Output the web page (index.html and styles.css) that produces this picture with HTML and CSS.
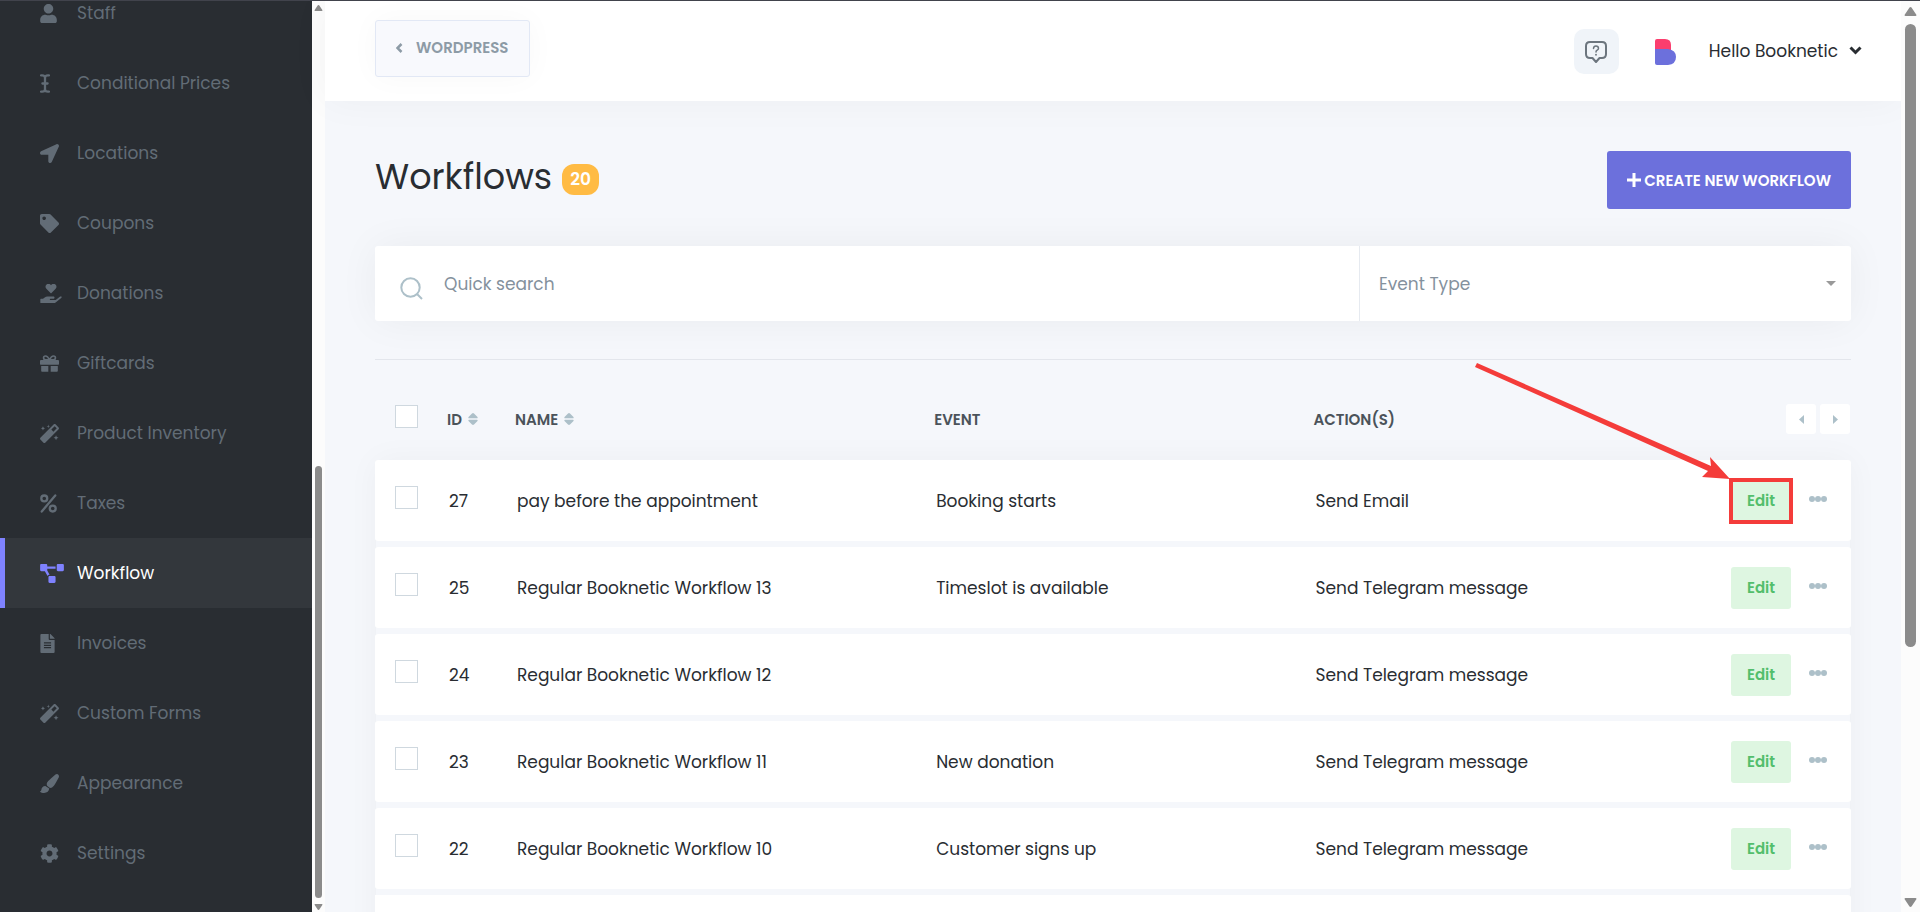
FILE: index.html
```html
<!DOCTYPE html>
<html lang="en">
<head>
    <meta charset="UTF-8">
    <meta name="viewport" content="width=device-width, initial-scale=1">
    <title>Workflows</title>
    <link rel="stylesheet" href="styles.css">
</head>
<body>
    <!-- Icon set -->
    <svg class="sprite" aria-hidden="true">
        <symbol id="i-user" viewBox="0 0 448 512"><path d="M224 256c70.700 0 128-57.300 128-128S294.700 0 224 0 96 57.300 96 128s57.300 128 128 128zm89.600 32h-16.700c-22.200 10.200-46.900 16-72.900 16s-50.600-5.800-72.900-16h-16.700C60.200 288 0 348.200 0 422.400V464c0 26.500 21.500 48 48 48h352c26.500 0 48-21.500 48-48v-41.600c0-74.200-60.200-134.400-134.400-134.400z"/></symbol>
        <symbol id="i-cursor" viewBox="0 0 256 512"><path d="M20 36h30q78 0 78 64v312q0 64-78 64H20M236 36h-30q-78 0-78 64M128 412q0 64 78 64h30M58 256h140" fill="none" stroke="currentColor" stroke-width="62" stroke-linecap="round"/></symbol>
        <symbol id="i-arrow" viewBox="0 0 512 512"><path d="M444.520 3.520L28.740 195.420c-47.970 22.390-31.980 92.750 19.190 92.750h175.910v175.910c0 51.170 70.360 67.170 92.750 19.190l191.900-415.780c15.990-38.390-25.590-79.970-63.970-63.970z"/></symbol>
        <symbol id="i-tag" viewBox="0 0 512 512"><path d="M0 252.118V48C0 21.490 21.490 0 48 0h204.118a48 48 0 0 1 33.941 14.059l211.882 211.882c18.745 18.745 18.745 49.137 0 67.882L293.823 497.941c-18.745 18.745-49.137 18.745-67.882 0L14.059 286.059A48 48 0 0 1 0 252.118zM112 64c-26.510 0-48 21.490-48 48s21.490 48 48 48 48-21.490 48-48-21.490-48-48-48z"/></symbol>
        <symbol id="i-donate" viewBox="0 0 576 512"><path d="M275 244l-112-114c-33-34-31-88 6-118 32-26 79-21 108 9l11 11 11-11c29-30 76-35 108-9 37 30 39 84 6 118L301 244c-7 7-19 7-26 0zM568 344c-12-11-31-10-43 0l-93 74c-11 9-25 14-40 14H272c-9 0-16-7-16-16s7-16 16-16h78c16 0 31-11 33-27 3-20-12-37-31-37H192c-27 0-53 9-74 26l-46 38H16c-9 0-16 7-16 16v80c0 9 7 16 16 16h357c14 0 28-5 39-14l152-121c15-12 16-35 4-47z"/></symbol>
        <symbol id="i-gift" viewBox="0 0 512 512"><path d="M32 320h192v160H64c-18 0-32-14-32-32zM288 320h192v128c0 18-14 32-32 32H288zM32 160h448c18 0 32 14 32 32v80c0 9-7 16-16 16H16c-9 0-16-7-16-16v-80c0-18 14-32 32-32z"/><path d="M256 160c-40-84-70-106-108-106-30 0-52 22-52 50 0 30 22 56 60 56zM256 160c40-84 70-106 108-106 30 0 52 22 52 50 0 30-22 56-60 56z" fill="none" stroke="currentColor" stroke-width="44"/></symbol>
        <symbol id="i-wand" viewBox="0 0 512 512"><path fill-rule="evenodd" d="M502 94L418 10c-13-13-33-13-46 0L10 372c-13 13-13 33 0 46l84 84c13 13 33 13 46 0l362-362c13-13 13-33 0-46zM361 207l-56-56 90-90 56 56zM80 60l18 38 38 18-38 18-18 38-18-38-38-18 38-18zM224 16l12 36 36 12-36 12-12 36-12-36-36-12 36-12zM432 300l20 48 48 20-48 20-20 48-20-48-48-20 48-20z"/></symbol>
        <symbol id="i-percent" viewBox="0 0 448 512"><g fill="none" stroke="currentColor"><circle cx="110" cy="120" r="80" stroke-width="62"/><circle cx="338" cy="392" r="80" stroke-width="62"/><path d="M406 40L42 472" stroke-width="62" stroke-linecap="round"/></g></symbol>
        <symbol id="i-flow" viewBox="0 0 640 512"><path d="M384 320H256c-17.670 0-32 14.330-32 32v128c0 17.670 14.330 32 32 32h128c17.670 0 32-14.330 32-32V352c0-17.670-14.330-32-32-32zM192 32c0-17.670-14.330-32-32-32H32C14.330 0 0 14.330 0 32v128c0 17.670 14.330 32 32 32h95.720l73.160 128.040C211.980 300.980 232.400 288 256 288h.280L192 175.510V128h224V64H192V32zM608 0H480c-17.670 0-32 14.330-32 32v128c0 17.670 14.330 32 32 32h128c17.670 0 32-14.330 32-32V32c0-17.670-14.330-32-32-32z"/></symbol>
        <symbol id="i-file" viewBox="0 0 384 512"><path fill-rule="evenodd" d="M224 136V0H24C10.700 0 0 10.700 0 24v464c0 13.300 10.700 24 24 24h336c13.300 0 24-10.700 24-24V160H248c-13.200 0-24-10.800-24-24zM96 224h192v32H96zM96 288h192v32H96zM96 352h192v32H96zM384 121.900v6.100H256V0h6.100c6.400 0 12.500 2.500 17 7l97.900 98c4.500 4.500 7 10.600 7 16.900z"/></symbol>
        <symbol id="i-brush" viewBox="0 0 512 512"><path d="M457 0c-15 0-30 6-41 16C213 197 182 218 182 276c0 14 3 28 9 41l67 54c8 2 16 3 25 3 60 0 97-44 214-263 8-15 15-31 15-48 0-38-26-63-55-63zM144 320c-69 0-102 52-106 98-2 22-10 38-30 44-6 3-8 8-8 14 20 24 66 36 110 36 78 0 136-42 138-118z"/></symbol>
        <symbol id="i-cog" viewBox="0 0 512 512"><path d="M487.400 315.700l-42.600-24.600c4.300-23.200 4.300-47 0-70.200l42.600-24.600c4.900-2.800 7.100-8.600 5.500-14-11.100-35.600-30-67.800-54.700-94.600-3.800-4.100-10-5.100-14.800-2.300L380.800 110c-17.900-15.400-38.500-27.300-60.800-35.100V25.800c0-5.600-3.900-10.500-9.400-11.700-36.700-8.200-74.300-7.800-109.200 0-5.500 1.200-9.400 6.100-9.400 11.700V75c-22.200 7.900-42.800 19.800-60.800 35.100L88.700 85.500c-4.900-2.800-11-1.900-14.800 2.300-24.700 26.700-43.600 58.900-54.700 94.600-1.700 5.400.6 11.200 5.500 14L67.300 221c-4.300 23.200-4.300 47 0 70.200l-42.600 24.600c-4.900 2.800-7.100 8.600-5.500 14 11.100 35.600 30 67.800 54.700 94.600 3.800 4.100 10 5.100 14.800 2.300l42.600-24.600c17.900 15.400 38.500 27.300 60.800 35.100v49.200c0 5.600 3.900 10.500 9.400 11.700 36.700 8.200 74.300 7.800 109.200 0 5.500-1.200 9.400-6.100 9.400-11.700v-49.200c22.200-7.900 42.800-19.800 60.800-35.100l42.600 24.600c4.900 2.800 11 1.900 14.800-2.300 24.700-26.700 43.600-58.900 54.700-94.600 1.500-5.500-.7-11.300-5.600-14.100zM256 336c-44.100 0-80-35.900-80-80s35.900-80 80-80 80 35.900 80 80-35.900 80-80 80z"/></symbol>
        <symbol id="i-sort" viewBox="0 0 10 12"><path d="M4 .4q1-.8 2 0l3.500 3.600q.5 1.300-.5 1.300H1Q0 5.300.5 4zM4 11.600q1 .8 2 0L9.500 8q.5-1.300-.5-1.300H1Q0 6.700.5 8z"/></symbol>
        <symbol id="i-dots" viewBox="0 0 18 6"><circle cx="3" cy="3" r="3"/><circle cx="9" cy="3" r="3"/><circle cx="15" cy="3" r="3"/></symbol>
    </svg>

    <div class="app">
        <nav class="sidebar">
            <a href="#"><svg width="17"><use href="#i-user"/></svg><span>Staff</span></a>
            <a href="#"><svg width="10"><use href="#i-cursor"/></svg><span>Conditional Prices</span></a>
            <a href="#"><svg width="19"><use href="#i-arrow"/></svg><span>Locations</span></a>
            <a href="#"><svg width="19"><use href="#i-tag"/></svg><span>Coupons</span></a>
            <a href="#"><svg width="22"><use href="#i-donate"/></svg><span>Donations</span></a>
            <a href="#"><svg width="19"><use href="#i-gift"/></svg><span>Giftcards</span></a>
            <a href="#"><svg width="19"><use href="#i-wand"/></svg><span>Product Inventory</span></a>
            <a href="#"><svg width="17"><use href="#i-percent"/></svg><span>Taxes</span></a>
            <a href="#" class="active"><svg width="24"><use href="#i-flow"/></svg><span>Workflow</span></a>
            <a href="#"><svg width="15"><use href="#i-file"/></svg><span>Invoices</span></a>
            <a href="#"><svg width="19"><use href="#i-wand"/></svg><span>Custom Forms</span></a>
            <a href="#"><svg width="19"><use href="#i-brush"/></svg><span>Appearance</span></a>
            <a href="#"><svg width="19"><use href="#i-cog"/></svg><span>Settings</span></a>
        </nav>
        <div class="scroll scroll-side">
            <svg width="9" height="6" viewBox="0 0 12 9"><path d="M6 0q1 0 2 2l4 6q0 1-1 1H1Q0 9 0 8l4-6q1-2 2-2z"/></svg>
            <div class="thumb"></div>
            <svg width="9" height="6" viewBox="0 0 12 9"><path d="M6 9q-1 0-2-2L0 1q0-1 1-1h10q1 0 1 1L8 7Q7 9 6 9z"/></svg>
        </div>

        <div class="main">
            <header class="topbar">
                <a href="#" class="back-btn">
                    <svg width="7" height="10" viewBox="0 0 7 10"><path d="M5.500 1L1.500 5l4 4" fill="none" stroke="currentColor" stroke-width="2.500"/></svg>
                    WORDPRESS
                </a>
                <div class="topbar-right">
                    <button class="help-btn" aria-label="Help">
                        <svg class="line" width="22" height="22" viewBox="0 0 22 22" stroke="currentColor" stroke-width="2" stroke-linejoin="round" stroke-linecap="round"><path d="M5 1h12q4 0 4 4v8q0 4-4 4h-2.500L11 21l-3.500-4H5q-4 0-4-4V5q0-4 4-4z"/><path d="M8.500 7.500Q8.700 5 11 5t2.500 2.200q0 1.300-1.300 2T11 11" stroke-width="1.500"/><path d="M11 13.600v.2" stroke-width="1.800"/></svg>
                    </button>
                    <svg class="logo" width="21" height="26" viewBox="0 0 21 26"><path fill="#fb3e6e" d="M2 0h8q6 0 6 6v5H0V2q0-2 2-2z"/><path fill="#6c70dc" d="M0 10h13q8 1 8 8t-8 8H2q-2 0-2-2z"/></svg>
                    <button class="user-btn">Hello Booknetic
                        <svg width="13" height="9" viewBox="0 0 13 9"><path d="M1.500 1.500l5 5 5-5" fill="none" stroke="currentColor" stroke-width="3"/></svg>
                    </button>
                </div>
            </header>

            <main class="content">
                <div class="title-row">
                    <h1>Workflows</h1>
                    <span class="badge">20</span>
                    <button class="create-btn">
                        <svg width="14" height="14" viewBox="0 0 14 14"><path d="M7 0v14M0 7h14" stroke="currentColor" stroke-width="3"/></svg>
                        CREATE NEW WORKFLOW
                    </button>
                </div>

                <div class="filters">
                    <label class="search">
                        <svg class="line" width="23" height="23" viewBox="0 0 23 23" stroke="currentColor" stroke-width="2"><circle cx="10.500" cy="10.500" r="9.200"/><path d="M17 17l5 5"/></svg>
                        <input type="text" placeholder="Quick search" aria-label="Quick search">
                    </label>
                    <div class="event-type">
                        <select aria-label="Event Type">
                            <option>Event Type</option>
                        </select>
                        <svg width="10" height="5" viewBox="0 0 10 5"><path d="M0 0h10L5 5z"/></svg>
                    </div>
                </div>

                <hr>

                <table class="workflows">
                    <colgroup>
                        <col class="c-check">
                        <col class="c-id">
                        <col class="c-name">
                        <col class="c-event">
                        <col>
                    </colgroup>
                    <thead>
                        <tr>
                            <th><input type="checkbox" aria-label="Select all"></th>
                            <th>ID <svg class="sort"><use href="#i-sort"/></svg></th>
                            <th>NAME <svg class="sort"><use href="#i-sort"/></svg></th>
                            <th>EVENT</th>
                            <th>
                                <div class="last-cell">
                                    ACTION(S)
                                    <div class="pager">
                                        <button aria-label="Previous"><svg width="5" height="9" viewBox="0 0 5 9"><path d="M5 0v9L0 4.500z"/></svg></button>
                                        <button aria-label="Next"><svg width="5" height="9" viewBox="0 0 5 9"><path d="M0 0v9l5-4.500z"/></svg></button>
                                    </div>
                                </div>
                            </th>
                        </tr>
                    </thead>
                    <tbody>
                        <tr>
                            <td><input type="checkbox" aria-label="Select 27"></td>
                            <td>27</td>
                            <td>pay before the appointment</td>
                            <td>Booking starts</td>
                            <td>
                                <div class="last-cell">
                                    Send Email
                                    <div class="row-actions">
                                        <div class="marked">
                                            <button class="edit-btn">Edit</button>
                                            <svg class="pointer" width="256" height="118" viewBox="0 0 256 118"><path d="M2 0L236 103l-1-9 20 22-28-2 6-6L0 4z"/></svg>
                                        </div>
                                        <button class="more-btn" aria-label="More"><svg><use href="#i-dots"/></svg></button>
                                    </div>
                                </div>
                            </td>
                        </tr>
                        <tr>
                            <td><input type="checkbox" aria-label="Select 25"></td>
                            <td>25</td>
                            <td>Regular Booknetic Workflow 13</td>
                            <td>Timeslot is available</td>
                            <td>
                                <div class="last-cell">
                                    Send Telegram message
                                    <div class="row-actions">
                                        <button class="edit-btn">Edit</button>
                                        <button class="more-btn" aria-label="More"><svg><use href="#i-dots"/></svg></button>
                                    </div>
                                </div>
                            </td>
                        </tr>
                        <tr>
                            <td><input type="checkbox" aria-label="Select 24"></td>
                            <td>24</td>
                            <td>Regular Booknetic Workflow 12</td>
                            <td></td>
                            <td>
                                <div class="last-cell">
                                    Send Telegram message
                                    <div class="row-actions">
                                        <button class="edit-btn">Edit</button>
                                        <button class="more-btn" aria-label="More"><svg><use href="#i-dots"/></svg></button>
                                    </div>
                                </div>
                            </td>
                        </tr>
                        <tr>
                            <td><input type="checkbox" aria-label="Select 23"></td>
                            <td>23</td>
                            <td>Regular Booknetic Workflow 11</td>
                            <td>New donation</td>
                            <td>
                                <div class="last-cell">
                                    Send Telegram message
                                    <div class="row-actions">
                                        <button class="edit-btn">Edit</button>
                                        <button class="more-btn" aria-label="More"><svg><use href="#i-dots"/></svg></button>
                                    </div>
                                </div>
                            </td>
                        </tr>
                        <tr>
                            <td><input type="checkbox" aria-label="Select 22"></td>
                            <td>22</td>
                            <td>Regular Booknetic Workflow 10</td>
                            <td>Customer signs up</td>
                            <td>
                                <div class="last-cell">
                                    Send Telegram message
                                    <div class="row-actions">
                                        <button class="edit-btn">Edit</button>
                                        <button class="more-btn" aria-label="More"><svg><use href="#i-dots"/></svg></button>
                                    </div>
                                </div>
                            </td>
                        </tr>
                        <tr>
                            <td colspan="5"></td>
                        </tr>
                    </tbody>
                </table>
            </main>
        </div>

        <div class="scroll scroll-main">
            <svg width="13" height="9" viewBox="0 0 12 9"><path d="M6 0q1 0 2 2l4 6q0 1-1 1H1Q0 9 0 8l4-6q1-2 2-2z"/></svg>
            <div class="thumb"></div>
            <svg width="13" height="9" viewBox="0 0 12 9"><path d="M6 9q-1 0-2-2L0 1q0-1 1-1h10q1 0 1 1L8 7Q7 9 6 9z"/></svg>
        </div>
    </div>
</body>
</html>
```
FILE: styles.css
```css
* {
    box-sizing: border-box;
}
body {
    margin: 0;
    font-family: Poppins, Inter, sans-serif;
    font-size: 17px;
    color: #292d32;
    background: #f5f7fb;
}
button, input, select {
    font: inherit;
    color: inherit;
    border: none;
    padding: 0;
    margin: 0;
}
button {
    cursor: pointer;
}
a {
    text-decoration: none;
}
svg {
    display: block;
    flex: none;
    fill: currentColor;
}
.line {
    fill: none;
}
.sprite {
    display: none;
}
.app {
    display: flex;
    height: 100vh;
    overflow: hidden;
    border-top: 1px solid #41434c;
}

/* Sidebar */
.sidebar {
    width: 312px;
    flex: none;
    display: flex;
    flex-direction: column;
    justify-content: flex-end;
    padding-bottom: 24px;
    background: #292d32;
}
.sidebar a {
    display: grid;
    grid-template-columns: 37px auto;
    align-items: center;
    flex: none;
    height: 70px;
    padding-left: 40px;
    color: #626c76;
}
.sidebar svg {
    height: 19px;
}
.sidebar .active {
    color: #7f82ff;
    background: #33373c;
    box-shadow: inset 5px 0 #7f82ff;
}
.sidebar .active span {
    color: #fff;
}

/* Scroll bars */
.scroll {
    flex: none;
    display: flex;
    flex-direction: column;
    align-items: center;
    justify-content: space-between;
    background: #fcfcfc;
    color: #8b8b8b;
}
.thumb {
    background: #8b8b8b;
    border-radius: 6px;
}
.scroll-side {
    width: 13px;
    padding: 4px 0 2px;
}
.scroll-side .thumb {
    width: 7px;
    height: 432px;
    margin: auto 0 6px;
}
.scroll-main {
    width: 19px;
    padding: 6px 0 5px;
}
.scroll-main .thumb {
    width: 11px;
    height: 623px;
    margin: 8px 0 auto;
}

/* Top bar */
.main {
    flex: 1;
    min-width: 0;
}
.topbar {
    display: flex;
    align-items: flex-start;
    justify-content: space-between;
    height: 100px;
    padding: 19px 39px 0 50px;
    background: #fff;
    box-shadow: 0 0 40px rgba(0, 0, 0, 0.04);
}
.back-btn {
    display: flex;
    align-items: center;
    gap: 13px;
    height: 57px;
    padding: 0 20px 2px;
    border: 1px solid #e2e8f5;
    border-radius: 3px;
    background: #f8f9fd;
    box-shadow: 0 0 30px rgba(0, 0, 0, 0.03);
    font-size: 15px;
    font-weight: 600;
    color: #8d9ba6;
}
.topbar-right {
    display: flex;
    align-items: center;
    padding-top: 9px;
}
.help-btn {
    display: flex;
    align-items: center;
    justify-content: center;
    width: 45px;
    height: 45px;
    border-radius: 10px;
    background: #f0f4f9;
    color: #6c757e;
}
.logo {
    margin: 0 33px 0 36px;
}
.user-btn {
    display: flex;
    align-items: center;
    gap: 11px;
    padding-bottom: 2px;
    background: none;
}

/* Content */
.content {
    padding: 50px 50px 0;
}
.title-row {
    display: flex;
    align-items: center;
    height: 58px;
}
h1 {
    margin: 0 10px 6px 0;
    font-size: 35px;
    font-weight: 400;
    line-height: 40px;
}
.badge {
    margin-bottom: 2px;
    padding: 0 8px;
    border-radius: 12px;
    background: #ffbb44;
    color: #fff;
    font-weight: 600;
    line-height: 31px;
}
.create-btn {
    display: flex;
    align-items: center;
    gap: 3px;
    height: 58px;
    margin-left: auto;
    padding: 0 20px;
    border-radius: 3px;
    background: #6c70dc;
    color: #fff;
    font-size: 15px;
    font-weight: 600;
}
.filters {
    display: grid;
    grid-template-columns: 2fr 1fr;
    height: 75px;
    margin-top: 37px;
    border-radius: 3px;
    background: #fff;
    box-shadow: 0 0 40px rgba(0, 0, 0, 0.05);
    color: #84919d;
}
.search {
    display: flex;
    align-items: center;
    gap: 21px;
    padding-left: 25px;
}
.search svg {
    margin-top: 10px;
    color: #adc0c9;
}
.search input {
    flex: 1;
    outline: none;
    background: none;
}
.search input::placeholder {
    color: #84919d;
}
.event-type {
    position: relative;
    border-left: 1px solid #e6eaf0;
}
.event-type select {
    appearance: none;
    width: 100%;
    height: 100%;
    padding-left: 19px;
    background: none;
}
.event-type svg {
    position: absolute;
    right: 15px;
    top: 35px;
    color: #999;
}
hr {
    height: 1px;
    margin: 38px 0 0;
    border: none;
    background: #e3e6ec;
}

/* Workflow table */
.workflows {
    width: 100%;
    margin-top: 28px;
    table-layout: fixed;
    border-collapse: separate;
    border-spacing: 0 6px;
}
.c-check {
    width: 72px;
}
.c-id {
    width: 68px;
}
.c-name {
    width: 28.4%;
}
.c-event {
    width: 25.7%;
}
th {
    height: 60px;
    padding: 0 0 10px;
    text-align: left;
    font-size: 15px;
    font-weight: 600;
    color: #4b535a;
}
td {
    height: 81px;
    padding: 0 0 0 2px;
    background: #fff;
}
th:first-child, td:first-child {
    padding-left: 20px;
    border-radius: 3px 0 0 3px;
}
td:last-child {
    border-radius: 0 3px 3px 0;
}
tbody {
    background: #eff1f5;
    box-shadow: 0 0 30px rgba(0, 0, 0, 0.04);
}
input[type="checkbox"] {
    appearance: none;
    display: block;
    width: 23px;
    height: 23px;
    margin-bottom: 6px;
    border: 1px solid #cfd8df;
    background: #fff;
}
.sort {
    display: inline-block;
    width: 10px;
    height: 12px;
    margin-left: 2px;
    color: #adc0c9;
}
.last-cell {
    display: flex;
    align-items: center;
    justify-content: space-between;
}
.pager {
    display: flex;
    gap: 4px;
    padding-right: 1px;
}
.pager button {
    display: flex;
    align-items: center;
    justify-content: center;
    width: 30px;
    height: 30px;
    border-radius: 3px;
    background: #fff;
    color: #adc0c9;
}
.row-actions {
    display: flex;
    align-items: center;
    gap: 18px;
    padding-right: 24px;
}
.edit-btn {
    display: block;
    width: 60px;
    height: 42px;
    border-radius: 3px;
    background: #def6e1;
    color: #53be6c;
    font-size: 15px;
    font-weight: 600;
}
.more-btn {
    padding-bottom: 4px;
    background: none;
    color: #adc0c9;
}
.more-btn svg {
    width: 18px;
    height: 6px;
}

/* Highlight around the first Edit button */
.marked {
    position: relative;
}
.marked::after {
    content: "";
    position: absolute;
    inset: -2px;
    border: 4px solid #f43c3a;
}
.pointer {
    position: absolute;
    right: 60px;
    bottom: 41px;
    color: #f43c3a;
}
```
